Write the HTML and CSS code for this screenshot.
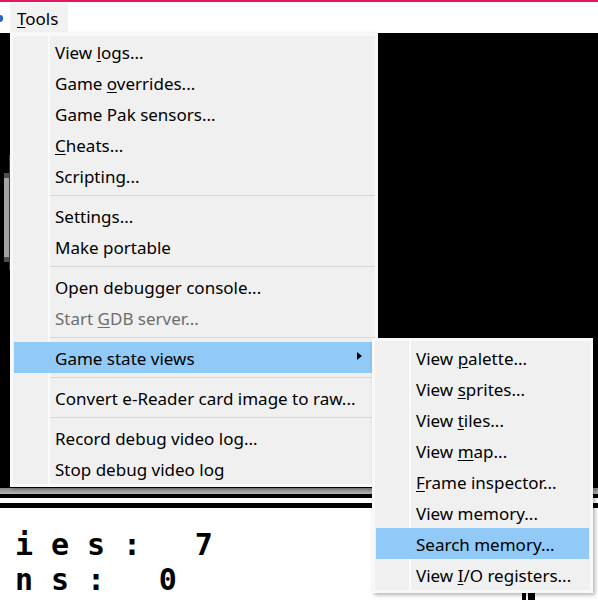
FILE: index.html
```html
<!DOCTYPE html>
<html>
<head>
<meta charset="utf-8">
<title>Tools menu</title>
<link rel="stylesheet" href="styles.css">
</head>
<body>
<div class="topline"></div>
<div class="menubar">
  <span class="peek"></span>
  <div class="bar-item"><u>T</u>ools</div>
</div>
<div class="screen">
  <div class="scroll">
    <div class="thumb"><i class="cap"></i><i class="cap"></i></div>
    <div class="rail"></div>
  </div>
</div>
<div class="stripes">
  <div class="s-gray"></div>
  <div class="s-black"></div>
  <div class="s-white"></div>
  <div class="s-black2"></div>
</div>
<div class="lower">
  <div class="pix-row"><span class="pix">ies: 7</span></div>
  <div class="pix-row row2"><span class="pix">ns: 0</span><div class="bars"><i class="b1"></i><i class="b2"></i></div></div>
</div>

<div class="menu main-menu">
  <div class="item"><span class="label">View <u>l</u>ogs...</span></div>
  <div class="item"><span class="label">Game <u>o</u>verrides...</span></div>
  <div class="item"><span class="label">Game Pak sensors...</span></div>
  <div class="item"><span class="label"><u>C</u>heats...</span></div>
  <div class="item"><span class="label">Scripting...</span></div>
  <div class="sep"></div>
  <div class="item"><span class="label">Settings...</span></div>
  <div class="item"><span class="label">Make portable</span></div>
  <div class="sep"></div>
  <div class="item"><span class="label">Open debugger console...</span></div>
  <div class="item disabled"><span class="label">Start <u>G</u>DB server...</span></div>
  <div class="sep"></div>
  <div class="item active"><span class="label">Game state views</span><span class="arrow"></span></div>
  <div class="sep"></div>
  <div class="item"><span class="label">Convert e-Reader card image to raw...</span></div>
  <div class="sep"></div>
  <div class="item"><span class="label">Record debug video log...</span></div>
  <div class="item"><span class="label">Stop debug video log</span></div>
</div>

<div class="menu sub-menu">
  <div class="item"><span class="label">View <u>p</u>alette...</span></div>
  <div class="item"><span class="label">View <u>s</u>prites...</span></div>
  <div class="item"><span class="label">View <u>t</u>iles...</span></div>
  <div class="item"><span class="label">View <u>m</u>ap...</span></div>
  <div class="item"><span class="label"><u>F</u>rame inspector...</span></div>
  <div class="item"><span class="label">View memory...</span></div>
  <div class="item active"><span class="label">Search memory...</span></div>
  <div class="item"><span class="label">View <u>I</u>/O registers...</span></div>
</div>
</body>
</html>
```
FILE: styles.css
```css
* { box-sizing: border-box; }
html, body { margin: 0; padding: 0; }
body {
  width: 598px;
  height: 600px;
  overflow: hidden;
  position: relative;
  background: #ffffff;
  font-family: "Noto Sans", sans-serif;
  font-size: 17px;
  color: #000000;
}
u { text-decoration: underline; text-decoration-thickness: 1px; text-underline-offset: 2px; }

.topline { height: 2px; background: #e8145c; }
.menubar { height: 31px; display: flex; align-items: flex-start; background: #ffffff; }
.peek { width: 3px; height: 7px; margin-top: 13px; background: #2a64c8; border-radius: 0 3px 3px 0; }
.bar-item {
  margin-left: 7px;
  margin-top: 1px;
  height: 29px;
  width: 58px;
  padding: 2px 0 0 7px;
  line-height: 27px;
  background: #f2f2f2;
}

.screen { height: 455px; background: #000000; overflow: hidden; }
.scroll { display: flex; align-items: flex-start; margin: 122px 0 0 4px; }
.thumb {
  width: 5px;
  height: 89px;
  margin-top: 18px;
  background: #a5a5a5;
  display: flex;
  flex-direction: column;
  justify-content: space-between;
}
.thumb .cap { display: block; height: 5px; background: #505050; }
.rail { width: 1px; height: 115px; background: #3c3c3c; }

.s-gray { height: 6px; background: linear-gradient(#8a8a8a, #b4b4b4); }
.s-black { height: 4px; background: #000000; }
.s-white { height: 5px; background: #ffffff; }
.s-black2 { height: 5px; background: #000000; }

.lower {
  padding: 19px 0 0 15px;
  font-family: "DejaVu Sans Mono", monospace;
  font-weight: bold;
  font-size: 30px;
  line-height: 35px;
}
.pix { white-space: pre; letter-spacing: 17.9px; }
.pix-row { height: 35px; }
.row2 { display: flex; }
.bars { margin-left: auto; margin-right: 63px; align-self: flex-end; margin-bottom: -3px; display: flex; gap: 2px; height: 11px; }
.bars i { display: block; background: #000000; }
.bars .b1 { width: 4px; }
.bars .b2 { width: 7px; }

.menu {
  position: absolute;
  border: 3px solid #f9f9f9;
  box-shadow: 2px 2px 4px rgba(0, 0, 0, 0.3);
}
.main-menu {
  left: 10px;
  top: 33px;
  width: 368px;
  background: linear-gradient(90deg, #f0f0f0 0 35px, #fbfbfb 35px 37px, #f0f0f0 37px);
}
.sub-menu {
  left: 372px;
  top: 338px;
  width: 221px;
  padding-top: 1px;
  background: linear-gradient(90deg, #f0f0f0 0 34px, #fbfbfb 34px 36px, #f0f0f0 36px);
}
.item {
  display: flex;
  height: 31px;
  margin: 0 1px;
  padding: 3px 0 0 41px;
  line-height: 28px;
  white-space: nowrap;
}
.sub-menu .item { padding-left: 40px; }
.item.active { background: #91c9f7; }
.item.disabled { color: #6d6d6d; }
.arrow {
  align-self: flex-start;
  margin: 7px 12px 0 auto;
  width: 0;
  height: 0;
  border-left: 5px solid #000000;
  border-top: 4.5px solid transparent;
  border-bottom: 4.5px solid transparent;
}
.sep { height: 9px; margin-left: 37px; padding-top: 4px; }
.sub-menu .sep { margin-left: 36px; }
.sep::after { content: ""; display: block; height: 1px; background: #d7d7d7; }
```
